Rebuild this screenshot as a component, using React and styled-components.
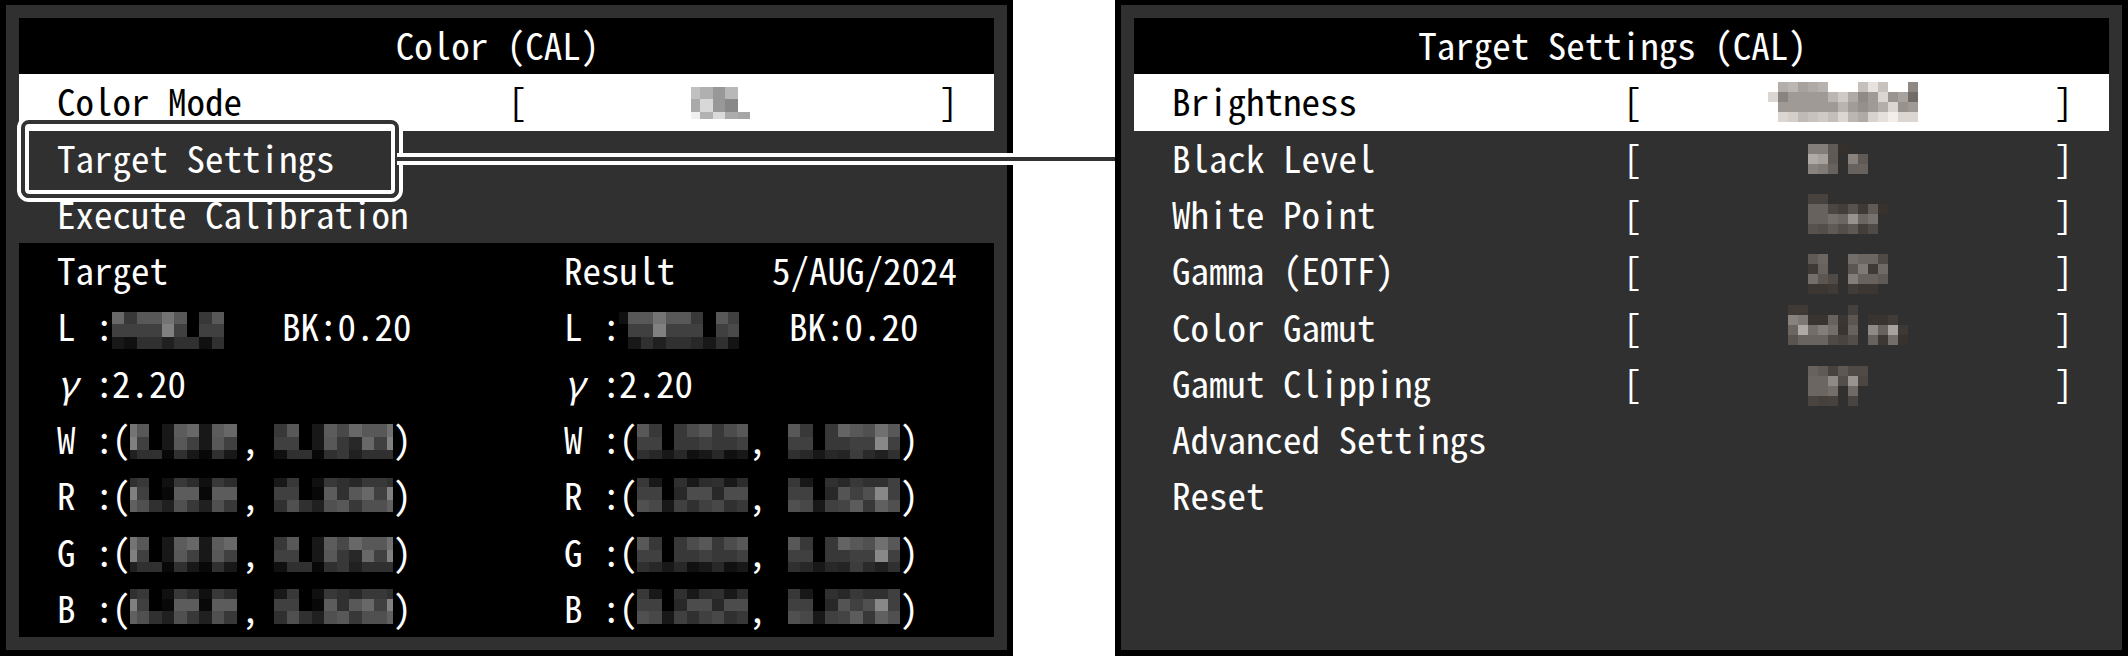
import React from 'react';
import styled, { createGlobalStyle } from 'styled-components';

const GlobalStyle = createGlobalStyle`
  * {
    box-sizing: border-box;
  }

  body {
    margin: 0;
    background: #fff;
    color: #fff;
    font-family: 'Noto Sans Mono CJK JP', 'Noto Sans CJK JP', 'Liberation Mono', monospace;
    font-size: 37px;
    line-height: 48px;
  }
`;

const Page = styled.main`
  display: grid;
  grid-template-columns: 1fr 1fr;
  gap: 102px;
  min-height: 100vh;
`;

const Panel = styled.section`
  display: flex;
  flex-direction: column;
  padding: 13px;
  background: #303030;
  border: 6px solid #000;
  border-top-width: 5px;
`;

const Title = styled.h1`
  flex: 1 0 0;
  display: flex;
  align-items: center;
  justify-content: center;
  margin: 0;
  padding-right: 18px;
  background: #000;
  font-size: inherit;
  font-weight: 400;
`;

const Menu = styled.ul`
  flex: ${({ $rows }) => $rows} 0 0;
  display: flex;
  flex-direction: column;
  margin: 0;
  padding: 0;
  list-style: none;
`;

const MenuItem = styled.li`
  position: relative;
  flex: 1 0 0;
  display: flex;
`;

const MenuButton = styled.button`
  flex: 1;
  display: grid;
  grid-template-columns: 1fr 450px;
  align-items: center;
  padding: 0 36px 0 38px;
  border: 0;
  background: ${({ $active }) => ($active ? '#fff' : 'transparent')};
  color: ${({ $active }) => ($active ? '#000' : '#fff')};
  font: inherit;
  text-align: left;
  cursor: pointer;
`;

const Label = styled.span`
  padding-bottom: 4px;
`;

const Value = styled.span`
  display: flex;
  align-items: center;
  justify-content: space-between;
`;

// Rounded frame around the selected entry
const Callout = styled.span`
  position: absolute;
  z-index: 1;
  top: -11px;
  left: 2px;
  width: 378px;
  height: 78px;
  border: 4px solid #333;
  border-radius: 8px;
  box-shadow: 0 0 0 4px #fff, inset 0 0 0 4px #fff;
  pointer-events: none;
`;

// Leader line running from the frame to the next panel
const Leader = styled.span`
  position: absolute;
  z-index: 2;
  top: 22px;
  left: 378px;
  right: -121px;
  height: 12px;
  background: #333;
  border: solid #fff;
  border-width: 4px 0;
  pointer-events: none;
`;

const Results = styled.div`
  flex: 7 0 0;
  display: grid;
  grid-template-columns: 507px 1fr;
  padding-left: 38px;
  background: #000;
`;

const Column = styled.div`
  display: flex;
  flex-direction: column;
`;

const Line = styled.div`
  flex: 1 0 0;
  display: flex;
  justify-content: space-between;
  align-items: center;
  padding-right: 37px;
`;

const Reading = styled.div`
  flex: 1 0 0;
  display: grid;
  grid-template-columns: 38px 17px 170px 1fr;
  align-items: center;
`;

const Coordinates = styled(Reading)`
  grid-template-columns: 38px 17px 18px 111px 19px 133px 19px;
`;

const Cell = styled.span`
  padding-bottom: 4px;
  white-space: nowrap;
  font-style: ${({ $italic }) => ($italic ? 'italic' : 'normal')};
`;

const Pixels = styled.svg`
  display: block;
  justify-self: ${({ $end }) => ($end ? 'end' : 'start')};
`;

const steps = (count, size) => Array.from({ length: count + 1 }, (_, i) => i * size);

// Each row is a list of hex grey levels, '..' leaves the cell empty
const Mosaic = ({ xs, ys, rows, top = 0, height = 56, warm, end }) => {
  const width = xs[xs.length - 1];
  return (
    <Pixels width={width} height={height} $end={end} shapeRendering="crispEdges" aria-hidden="true">
      {rows.map((row, r) =>
        row.split(' ').map((level, c) => {
          if (level === '..') return null;
          const v = parseInt(level, 16);
          const fill = warm && v < 250 ? `rgb(${v}, ${v - 6}, ${v - 9})` : `rgb(${v}, ${v}, ${v})`;
          return (
            <rect
              key={`${r}-${c}`}
              x={xs[c]}
              y={top + ys[r]}
              width={xs[c + 1] - xs[c]}
              height={ys[r + 1] - ys[r]}
              fill={fill}
            />
          );
        })
      )}
    </Pixels>
  );
};

const colorMode = {
  xs: [0, 9, 22, 34, 47, 59, 84],
  ys: [0, 12, 25, 32],
  top: 13,
  rows: ['c0 b0 98 b8', 'aa d8 98 88', 'f0 b2 da ac a6'],
};

const tenPixel = (cols, top, rows) => ({
  xs: steps(cols, 10),
  ys: steps(4, 10),
  top,
  rows,
  warm: true,
});

const targetSettings = [
  {
    label: 'Brightness',
    active: true,
    value: tenPixel(16, 8, [
      '.. b4 bc a8 b0 b8 .. .. .. c6 e8 c8 .. .. 8e',
      'dc 8a a0 a0 a0 a0 bc d0 b0 90 a0 dc 9a a8 72',
      '.. a0 a0 a0 a0 a0 a0 ba a2 96 a0 b4 dc 98 a0',
      '.. dc d4 c0 c8 d0 c4 dc bc b0 d8 e6 f4 dc dc',
    ]),
  },
  {
    label: 'Black Level',
    value: tenPixel(8, 13, ['84 84 60 36', 'b0 a6 60 .. 88 60', '88 80 68 .. 68 68']),
  },
  {
    label: 'White Point',
    value: tenPixel(8, 7, [
      '48 48',
      '68 68 4c 44 58 40 60 38',
      '68 68 74 6c 98 6c 78',
      '58 54 60 54 5e 44 50',
    ]),
  },
  {
    label: 'Gamma (EOTF)',
    value: tenPixel(8, 11, [
      '60 6c .. .. 74 6c 6c 50',
      '40 68 .. .. 5c 80 40 70',
      '74 5c 50 .. 84 68 68 60',
      '3c 3c 40 .. 42 3c 3c',
    ]),
  },
  {
    label: 'Color Gamut',
    value: tenPixel(12, 5, [
      '40 40 .. .. .. .. 46',
      '88 7e 3a 3a 68 3c 5c .. 3a 3a 42',
      '6c b0 74 84 74 3a 68 .. 90 68 a8 3e',
      '5a 6a 6a 6a 50 4a 54 .. 68 3e 74 38',
    ]),
  },
  {
    label: 'Gamut Clipping',
    value: tenPixel(8, 10, [
      '68 60 48 5e 50 50',
      '6c 6c 90 54 9a 4c',
      '6c 6c 74 .. 70',
      '4a 46 48 .. 4a',
    ]),
  },
  { label: 'Advanced Settings' },
  { label: 'Reset' },
];

const rowTops = {
  W: { top: 12, ys: [0, 13, 26, 35] },
  R: { top: 10, ys: [0, 9, 22, 34] },
  G: { top: 12, ys: [0, 13, 25, 35] },
  B: { top: 8, ys: [0, 10, 22, 35] },
};

const target = {
  luminance: {
    xs: [0, 12, 25, 37, 50, 62, 75, 87, 100, 112],
    rows: [
      '68 38 58 58 74 58 00 38 58',
      '40 40 40 40 80 40 00 40 40',
      '18 10 30 30 20 30 30 10 30',
    ],
  },
  x: {
    xs: [0, 7, 19, 32, 44, 57, 69, 82, 94, 107],
    even: [
      '74 58 00 18 5c 68 18 5c 68',
      '80 40 00 18 58 40 18 58 40',
      '20 30 30 08 30 18 08 30 18',
    ],
    odd: [
      '30 38 00 10 38 2c 10 38 2c',
      '80 40 00 08 5c 5c 08 5c 5c',
      '60 50 30 20 50 38 20 50 38',
    ],
  },
  y: {
    xs: [0, 13, 25, 38, 50, 63, 75, 88, 100, 113, 119],
    even: [
      '38 58 00 18 5c 48 68 58 58 70',
      '40 40 00 18 58 38 28 68 40 80',
      '10 30 30 08 30 38 20 30 30 30',
    ],
    odd: [
      '18 38 00 10 38 30 28 38 38 30',
      '40 40 00 08 5c 30 58 68 40 80',
      '30 50 30 20 50 58 38 50 50 60',
    ],
  },
};

const result = {
  luminance: {
    xs: [0, 9, 22, 34, 47, 59, 72, 84, 97, 109, 120],
    rows: [
      '10 58 58 74 58 58 38 00 58 40',
      '00 40 40 80 40 40 40 00 40 4a',
      '00 18 30 20 30 30 28 18 30 14',
    ],
  },
  x: {
    xs: [0, 12, 25, 37, 50, 62, 75, 87, 100, 111],
    even: [
      '58 38 00 38 4c 58 38 4c 58',
      '40 40 00 38 38 40 38 38 40',
      '30 28 18 28 10 18 28 10 18',
    ],
    odd: [
      '38 18 00 30 18 2c 30 18 2c',
      '40 40 00 28 4c 4c 28 4c 4c',
      '50 48 18 40 30 40 48 30 38',
    ],
  },
  y: {
    xs: [0, 12, 25, 37, 50, 62, 75, 87, 100, 112],
    even: [
      '58 38 00 38 64 58 50 70 58',
      '40 40 00 38 38 40 40 88 40',
      '30 28 18 28 24 3c 2a 20 30',
    ],
    odd: [
      '38 18 00 30 28 38 30 30 40',
      '40 40 00 28 54 40 50 88 40',
      '50 48 18 40 44 5c 38 60 50',
    ],
  },
};

const MenuRow = ({ label, value, active, framed }) => (
  <MenuItem>
    <MenuButton type="button" $active={active}>
      <Label>{label}</Label>
      {value && (
        <Value>
          <Label>[</Label>
          <Mosaic {...value} />
          <Label>]</Label>
        </Value>
      )}
    </MenuButton>
    {framed && (
      <>
        <Callout />
        <Leader />
      </>
    )}
  </MenuItem>
);

const Measurements = ({ heading, date, data }) => (
  <Column>
    <Line>
      <Cell>{heading}</Cell>
      {date && <Cell>{date}</Cell>}
    </Line>
    <Reading>
      <Cell>L</Cell>
      <Cell>:</Cell>
      <Mosaic {...data.luminance} ys={[0, 12, 25, 37]} top={13} />
      <Cell>BK:0.20</Cell>
    </Reading>
    <Reading>
      <Cell $italic>γ</Cell>
      <Cell>:</Cell>
      <Cell>2.20</Cell>
    </Reading>
    {['W', 'R', 'G', 'B'].map((name, i) => {
      const pattern = i % 2 ? 'odd' : 'even';
      return (
        <Coordinates key={name}>
          <Cell>{name}</Cell>
          <Cell>:</Cell>
          <Cell>(</Cell>
          <Mosaic xs={data.x.xs} rows={data.x[pattern]} {...rowTops[name]} />
          <Cell>,</Cell>
          <Mosaic xs={data.y.xs} rows={data.y[pattern]} {...rowTops[name]} end />
          <Cell>)</Cell>
        </Coordinates>
      );
    })}
  </Column>
);

const App = () => (
  <>
    <GlobalStyle />
    <Page>
      <Panel>
        <Title>
          <Label>Color (CAL)</Label>
        </Title>
        <Menu $rows={3}>
          <MenuRow label="Color Mode" value={colorMode} active />
          <MenuRow label="Target Settings" framed />
          <MenuRow label="Execute Calibration" />
        </Menu>
        <Results>
          <Measurements heading="Target" data={target} />
          <Measurements heading="Result" date="5/AUG/2024" data={result} />
        </Results>
      </Panel>
      <Panel>
        <Title>
          <Label>Target Settings (CAL)</Label>
        </Title>
        <Menu $rows={10}>
          {targetSettings.map((item) => (
            <MenuRow key={item.label} {...item} />
          ))}
          <MenuItem aria-hidden="true" />
          <MenuItem aria-hidden="true" />
        </Menu>
      </Panel>
    </Page>
  </>
);

export default App;
